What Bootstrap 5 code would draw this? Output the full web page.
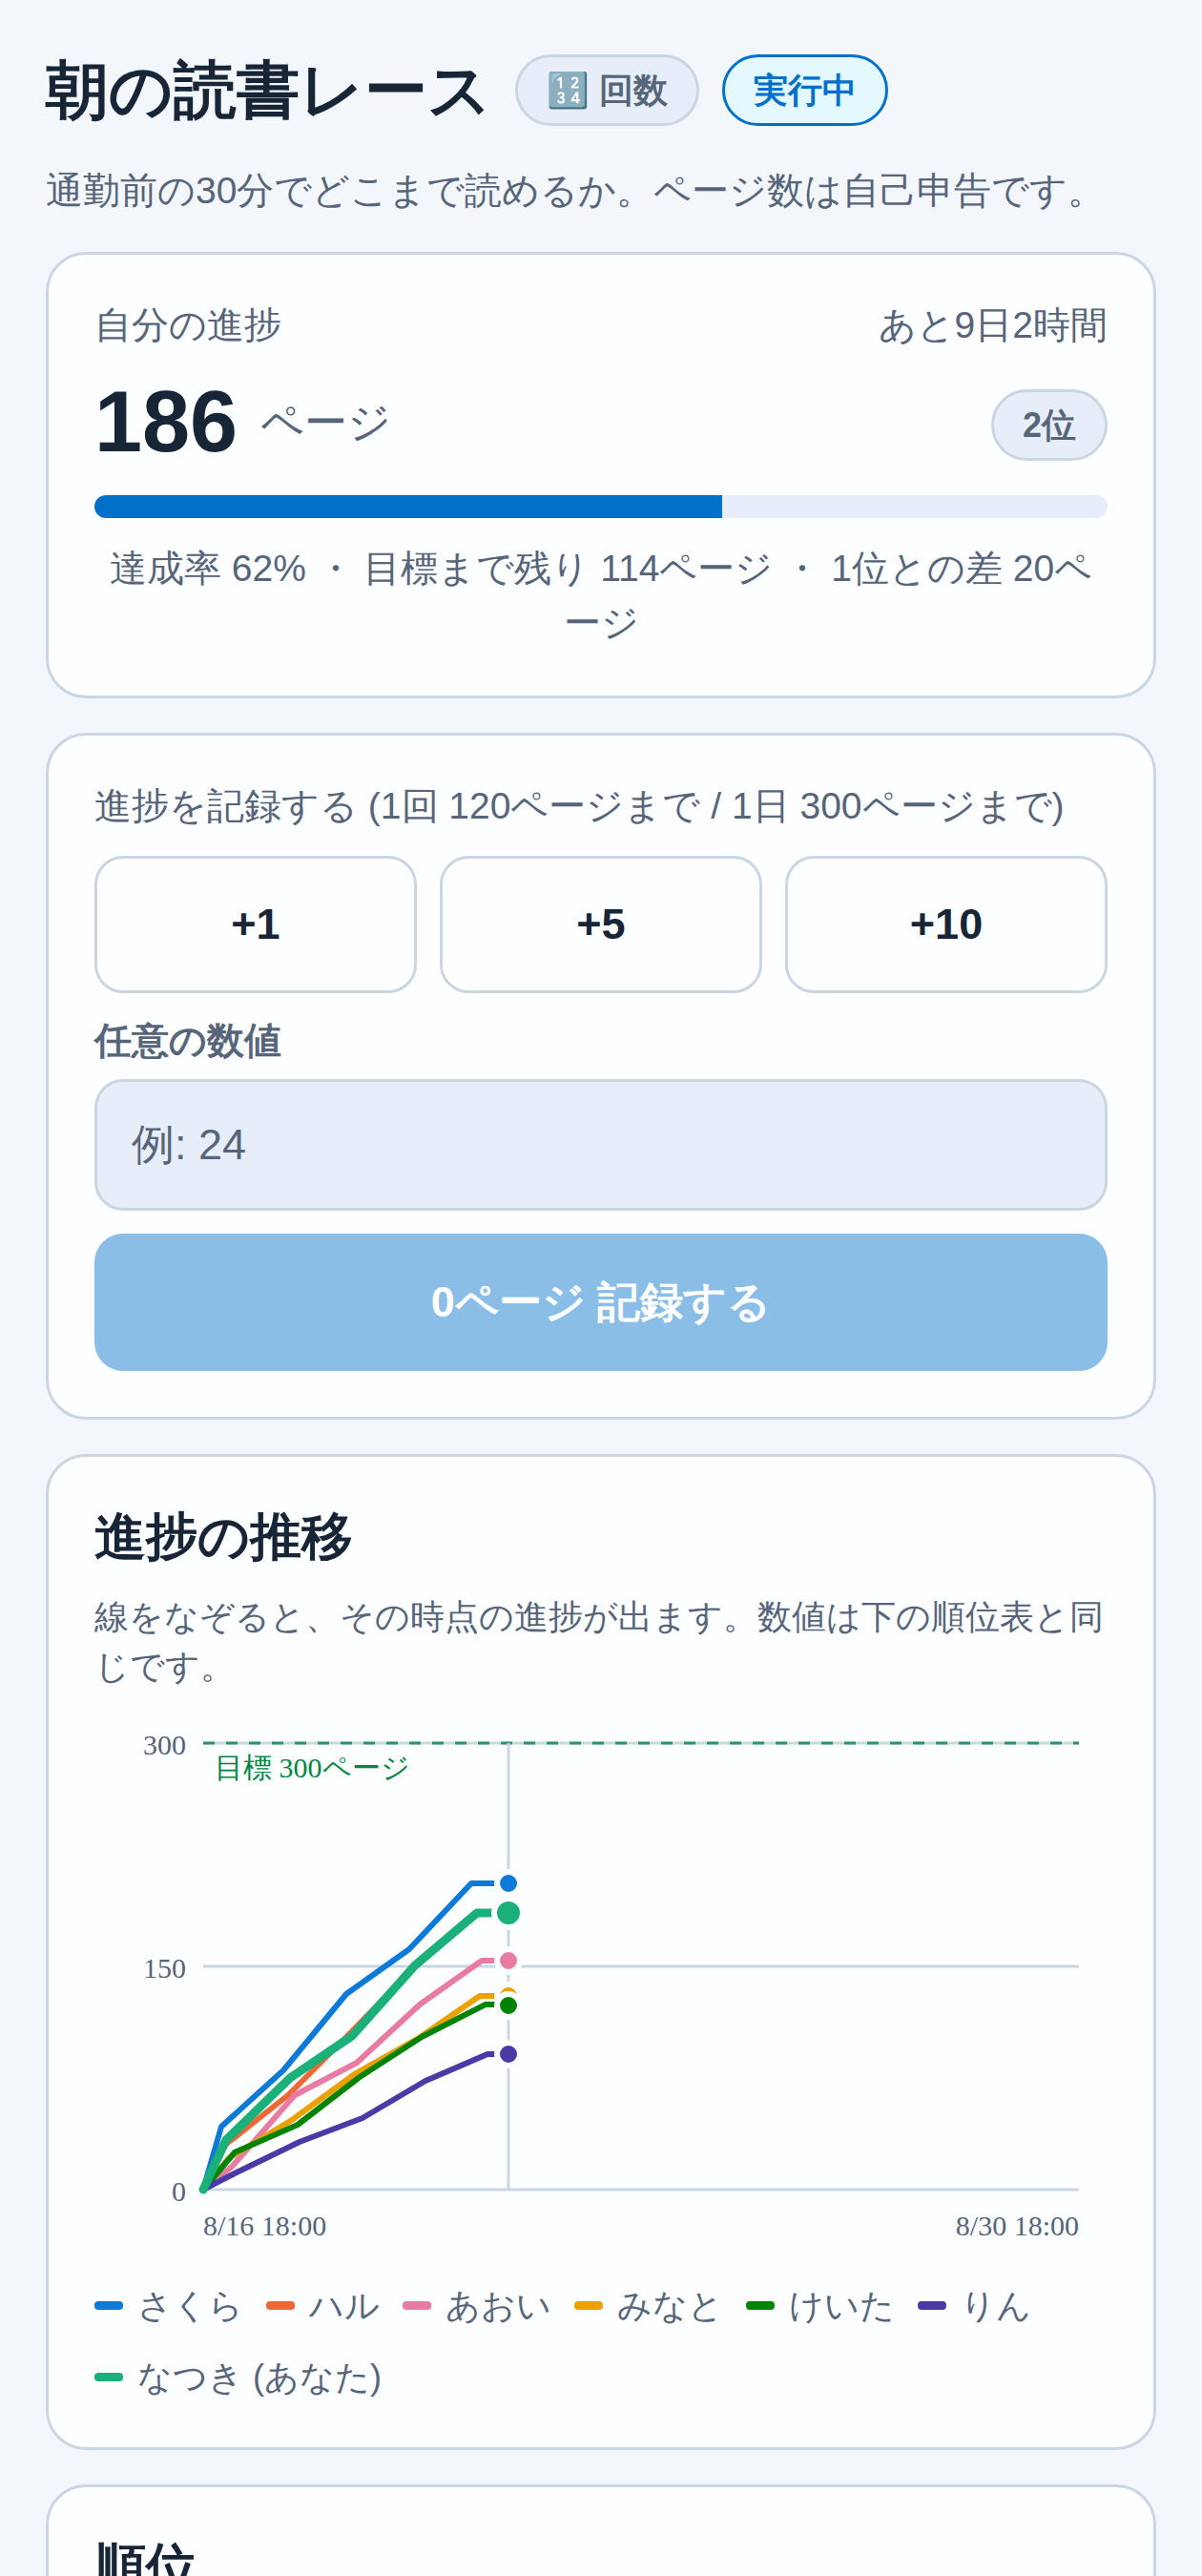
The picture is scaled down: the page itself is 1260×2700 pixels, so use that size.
<!DOCTYPE html>
<html lang="ja">
<head>
<meta charset="utf-8">
<meta name="viewport" content="width=device-width, initial-scale=1">
<title>朝の読書レース</title>
<link href="https://cdn.jsdelivr.net/npm/bootstrap@5.3.0/dist/css/bootstrap.min.css" rel="stylesheet">
<style>
:root{--ink:#172536;--muted:#566579;--line:#cbd6e3;--soft:#e8eef9;--primary:#0070c8;--surface:#fdfeff;}
body{background:#f3f6fb;color:var(--ink);font-family:"Liberation Sans",sans-serif;font-size:39px;line-height:57px;}
.page{padding:48px 48px 0;}
.title{font-size:66px;line-height:92px;}
.gap-m{gap:24px;}
.quiet{color:var(--muted);}
.caption-line{line-height:52px;}
.chip{font-size:36px;line-height:51px;padding:9px 30px;border:3px solid var(--line);background:var(--soft);color:var(--muted);}
.chip-live{border-color:var(--primary);background:#e3f8ff;color:var(--primary);}
.intro{margin:31px 0 36px;}
.panel{background:var(--surface);border:3px solid var(--line);border-radius:42px;padding:48px;margin-bottom:36px;}
.summary{margin:29px 0 24px;}
.tally{padding-bottom:6px;}
.score{font-size:90px;line-height:93px;}
.unit{font-size:45px;}
.meter{height:24px;border-radius:12px;background:var(--soft);margin-bottom:24px;}
.meter .progress-bar{background:var(--primary);}
.step,.entry,.submit{font-size:45px;line-height:66px;border-radius:30px;border:3px solid var(--line);}
.step{padding:36px 0;background:var(--surface);color:var(--ink);}
.steps{margin:26px 0 24px;}
.field-label{margin-bottom:14px;}
.entry{padding:33px 36px;background:var(--soft);}
.entry::placeholder{color:var(--muted);opacity:1;}
.submit,.submit:disabled{padding:39px 0;border:0;background:#8bbee6;color:#fff;opacity:1;margin-top:24px;}
.heading{font-size:54px;line-height:70px;margin-bottom:24px;}
.note{font-size:36px;line-height:52px;margin-bottom:24px;}
.chart{font-family:"Liberation Serif",serif;font-size:30px;margin-bottom:24px;fill:var(--muted);}
.grid{stroke:var(--line);stroke-width:3;}
.goal{stroke:#008545;stroke-width:3;stroke-dasharray:12 12;opacity:.8;}
.series polyline{fill:none;stroke-width:6;stroke-linejoin:round;stroke-linecap:round;}
.series .own{stroke-width:9;}
.dots circle{stroke:var(--surface);stroke-width:6;}
.legend-list{font-size:36px;line-height:51px;}
.legend-list li{gap:15px;}
.swatch{width:30px;height:9px;border-radius:4px;}
.ranking{min-height:300px;}
</style>
</head>
<body>
<main class="page vh-100 overflow-hidden d-flex flex-column">
  <header>
    <div class="d-flex align-items-center gap-m">
      <h1 class="title fw-bold mb-0">朝の読書レース</h1>
      <span class="chip rounded-pill fw-bold">🔢 回数</span>
      <span class="chip chip-live rounded-pill fw-bold">実行中</span>
    </div>
    <p class="intro quiet">通勤前の30分でどこまで読めるか。ページ数は自己申告です。</p>
  </header>

  <section class="panel flex-shrink-0">
    <div class="caption-line d-flex justify-content-between quiet"><span>自分の進捗</span><span>あと9日2時間</span></div>
    <div class="summary d-flex align-items-center justify-content-between">
      <div class="tally d-flex align-items-center gap-m">
        <strong class="score">186</strong>
        <span class="unit quiet">ページ</span>
      </div>
      <span class="chip rounded-pill fw-bold">2位</span>
    </div>
    <div class="progress meter" role="progressbar" aria-label="達成率" aria-valuenow="62" aria-valuemin="0" aria-valuemax="100">
      <div class="progress-bar" style="width:62%"></div>
    </div>
    <p class="quiet text-center mb-0">達成率 62% ・ 目標まで残り 114ページ ・ 1位との差 20ページ</p>
  </section>

  <section class="panel flex-shrink-0">
    <p class="caption-line quiet mb-0">進捗を記録する (1回 120ページまで / 1日 300ページまで)</p>
    <div class="steps d-flex gap-m">
      <button type="button" class="btn step fw-bold flex-fill w-100">+1</button>
      <button type="button" class="btn step fw-bold flex-fill w-100">+5</button>
      <button type="button" class="btn step fw-bold flex-fill w-100">+10</button>
    </div>
    <label for="amount" class="field-label caption-line d-block quiet fw-bold">任意の数値</label>
    <input id="amount" class="form-control entry" type="text" inputmode="numeric" placeholder="例: 24">
    <button type="button" class="btn submit d-block fw-bold w-100" disabled>0ページ 記録する</button>
  </section>

  <section class="panel flex-shrink-0">
    <h2 class="heading fw-bold">進捗の推移</h2>
    <p class="note quiet">線をなぞると、その時点の進捗が出ます。数値は下の順位表と同じです。</p>
    <svg class="chart d-block w-100" viewBox="0 0 1062 570" role="img" aria-label="進捗の推移">
      <g class="grid">
        <path d="M114 30H1032M114 264H1032M114 498H1032"/>
      </g>
      <path class="goal" d="M114 30H1032"/>
      <path class="grid" d="M434 30V498"/>
      <g text-anchor="end">
        <text x="96" y="42">300</text>
        <text x="96" y="276">150</text>
        <text x="96" y="510">0</text>
        <text x="1032" y="546">8/30 18:00</text>
      </g>
      <text x="114" y="546">8/16 18:00</text>
      <text x="126" y="66" fill="#008545">目標 300ページ</text>
      <g class="series">
        <polyline stroke="#0d7ad8" points="114,498 133,432 198,373 264,293 330,246 395,177 434,177"/>
        <polyline stroke="#ec6835" points="114,498 136,452 203,399 269,333 336,264 400,209 434,209"/>
        <polyline stroke="#e87ba4" points="114,498 144,474 210,399 275,365 341,304 406,258 434,258"/>
        <polyline stroke="#eda100" points="114,498 141,465 207,425 274,376 340,339 404,295 434,295"/>
        <polyline stroke="#008300" points="114,498 147,459 213,430 278,380 343,338 410,304 434,304"/>
        <polyline stroke="#4a3aa7" points="114,498 149,480 215,448 281,423 347,384 412,356 434,356"/>
        <polyline class="own" stroke="#1baf7a" points="114,498 138,446 205,381 270,337 336,263 401,208 434,208"/>
      </g>
      <g class="dots">
        <circle cx="434" cy="177" r="12" fill="#0d7ad8"/>
        <circle cx="434" cy="209" r="12" fill="#ec6835"/>
        <circle cx="434" cy="258" r="12" fill="#e87ba4"/>
        <circle cx="434" cy="295" r="12" fill="#eda100"/>
        <circle cx="434" cy="305" r="12" fill="#008300"/>
        <circle cx="434" cy="356" r="12" fill="#4a3aa7"/>
        <circle cx="434" cy="208" r="15" fill="#1baf7a"/>
      </g>
    </svg>
    <ul class="legend-list list-unstyled d-flex flex-wrap gap-m quiet mb-0">
      <li class="d-flex align-items-center"><span class="swatch" style="background:#0d7ad8"></span>さくら</li>
      <li class="d-flex align-items-center"><span class="swatch" style="background:#ec6835"></span>ハル</li>
      <li class="d-flex align-items-center"><span class="swatch" style="background:#e87ba4"></span>あおい</li>
      <li class="d-flex align-items-center"><span class="swatch" style="background:#eda100"></span>みなと</li>
      <li class="d-flex align-items-center"><span class="swatch" style="background:#008300"></span>けいた</li>
      <li class="d-flex align-items-center"><span class="swatch" style="background:#4a3aa7"></span>りん</li>
      <li class="d-flex align-items-center"><span class="swatch" style="background:#1baf7a"></span>なつき (あなた)</li>
    </ul>
  </section>

  <section class="panel ranking flex-shrink-0">
    <h2 class="heading fw-bold">順位</h2>
  </section>
</main>
<script src="https://cdn.jsdelivr.net/npm/bootstrap@5.3.0/dist/js/bootstrap.bundle.min.js"></script>
</body>
</html>
